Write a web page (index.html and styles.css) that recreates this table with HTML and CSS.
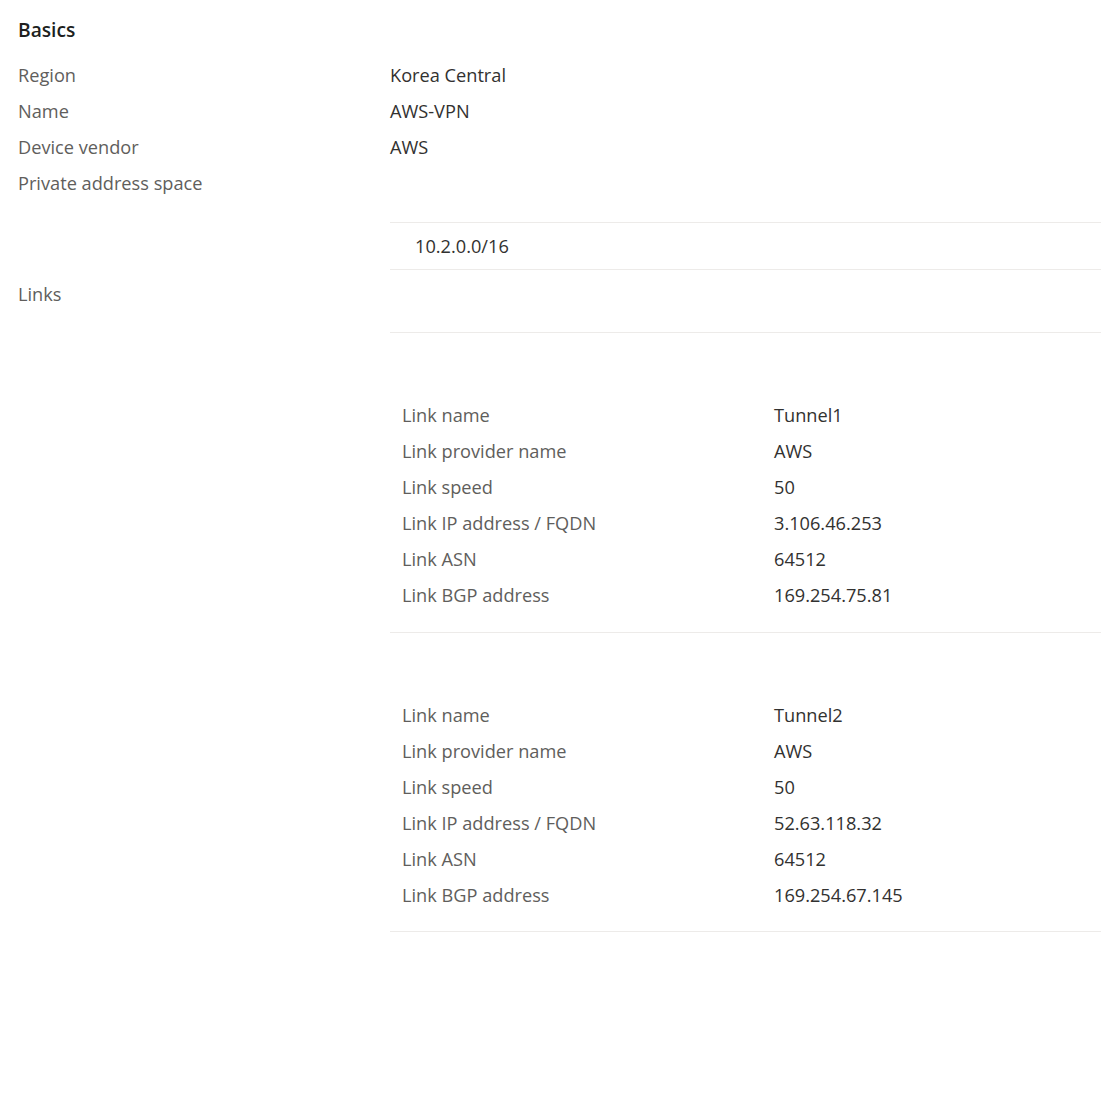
FILE: index.html
```html
<!DOCTYPE html>
<html lang="en">
<head>
<meta charset="utf-8">
<title>Basics</title>
<link rel="stylesheet" href="styles.css">
</head>
<body>
<div class="page">
  <h2 class="heading">Basics</h2>
  <div class="row"><div class="label">Region</div><div class="value">Korea Central</div></div>
  <div class="row"><div class="label">Name</div><div class="value">AWS-VPN</div></div>
  <div class="row"><div class="label">Device vendor</div><div class="value">AWS</div></div>
  <div class="row tall">
    <div class="label">Private address space</div>
    <div class="col">
      <div class="addr-table"><div class="addr-cell">10.2.0.0/16</div></div>
    </div>
  </div>
  <div class="row tall links-row">
    <div class="label">Links</div>
    <div class="col">
      <div class="links-head"></div>
      <div class="link-block first">
        <div class="row"><div class="label">Link name</div><div class="value">Tunnel1</div></div>
        <div class="row"><div class="label">Link provider name</div><div class="value">AWS</div></div>
        <div class="row"><div class="label">Link speed</div><div class="value">50</div></div>
        <div class="row"><div class="label">Link IP address / FQDN</div><div class="value">3.106.46.253</div></div>
        <div class="row"><div class="label">Link ASN</div><div class="value">64512</div></div>
        <div class="row"><div class="label">Link BGP address</div><div class="value">169.254.75.81</div></div>
      </div>
      <div class="link-block">
        <div class="row"><div class="label">Link name</div><div class="value">Tunnel2</div></div>
        <div class="row"><div class="label">Link provider name</div><div class="value">AWS</div></div>
        <div class="row"><div class="label">Link speed</div><div class="value">50</div></div>
        <div class="row"><div class="label">Link IP address / FQDN</div><div class="value">52.63.118.32</div></div>
        <div class="row"><div class="label">Link ASN</div><div class="value">64512</div></div>
        <div class="row"><div class="label">Link BGP address</div><div class="value">169.254.67.145</div></div>
      </div>
    </div>
  </div>
</div>
</body>
</html>
```
FILE: styles.css
```css
html, body {
  margin: 0;
  padding: 0;
  background: #ffffff;
}
body {
  font-family: "Open Sans", "Noto Sans", "Liberation Sans", sans-serif;
  font-size: 18.2px;
  color: #323130;
}
.page {
  padding-left: 18px;
}
.heading {
  margin: 12px 0 9px 0;
  height: 36px;
  line-height: 36px;
  font-size: 19.2px;
  font-weight: 600;
  color: #201f1e;
}
.row {
  display: flex;
  min-height: 36px;
  line-height: 36px;
}
.label {
  width: 372px;
  flex: none;
  color: #605e5c;
  white-space: nowrap;
}
.value {
  flex: 1;
  color: #323130;
  white-space: nowrap;
}
.col {
  flex: 1;
}
.tall > .label {
  align-self: flex-start;
}
.addr-table {
  margin-top: 57px;
  border-top: 1px solid #edebe9;
  border-bottom: 1px solid #edebe9;
}
.addr-cell {
  height: 46px;
  line-height: 46px;
  padding-left: 25px;
}
.links-row {
  margin-top: 6px;
}
.links-head {
  height: 56px;
  border-bottom: 1px solid #edebe9;
}
.link-block {
  padding: 64px 0 18px 12px;
  border-bottom: 1px solid #edebe9;
}
.link-block.first {
  padding-bottom: 19px;
}
```
